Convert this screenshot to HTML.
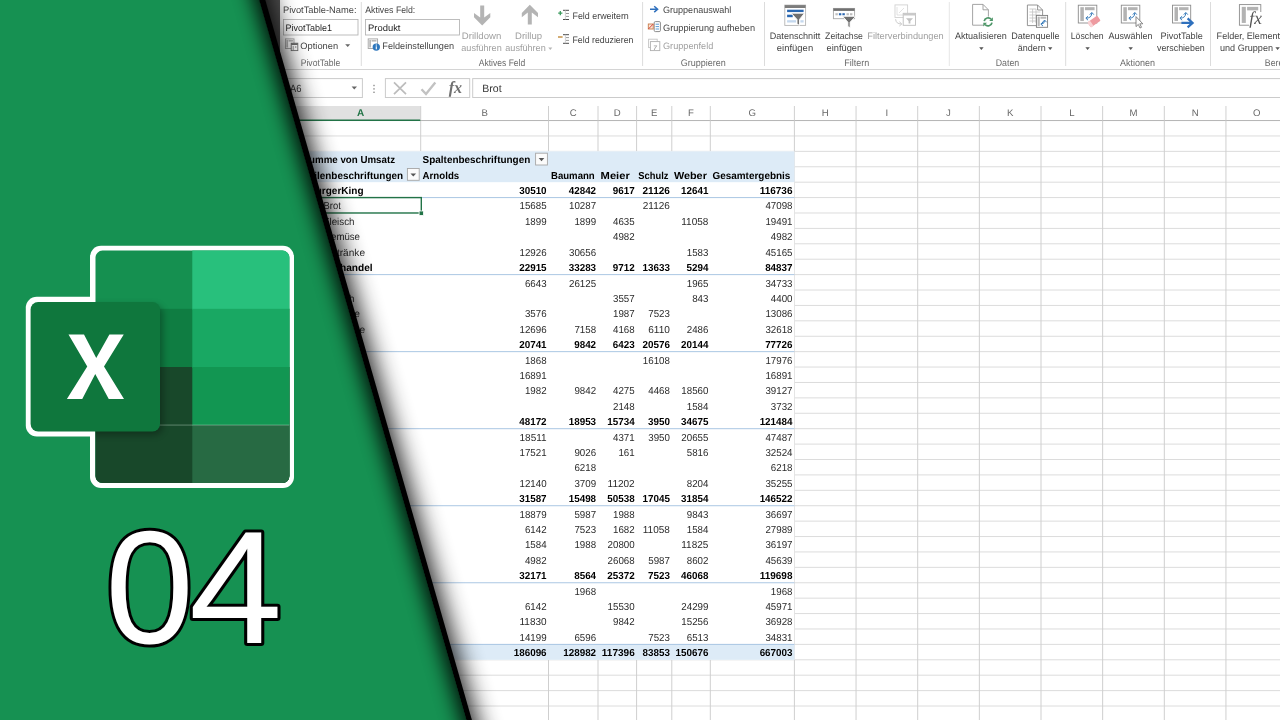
<!DOCTYPE html>
<html lang="de"><head><meta charset="utf-8"><title>Excel PivotTable 04</title>
<style>html,body{margin:0;padding:0;background:#fff;overflow:hidden}svg{display:block}</style>
</head><body>
<svg width="1280" height="720" viewBox="0 0 1280 720" text-rendering="geometricPrecision" font-family='"Liberation Sans", sans-serif'>
<defs>
<filter id="soft" x="-5%" y="-5%" width="110%" height="110%"><feGaussianBlur stdDeviation="0.4"/></filter>
<filter id="shb" x="-20%" y="-20%" width="140%" height="140%"><feGaussianBlur stdDeviation="12"/></filter>
<filter id="shg" x="-30%" y="-20%" width="160%" height="140%"><feGaussianBlur stdDeviation="10"/></filter>
<filter id="shl" x="-20%" y="-20%" width="140%" height="140%"><feGaussianBlur stdDeviation="3.5"/></filter>
<clipPath id="greenclip"><polygon points="0,0 259.5,0 466.5,720 0,720"/></clipPath>
</defs>
<rect width="1280" height="720" fill="#ffffff"/>
<g id="excel" filter="url(#soft)">
<line x1="276" y1="135.96" x2="1280" y2="135.96" stroke="#dcdcdc" stroke-width="1"/>
<line x1="276" y1="151.36" x2="1280" y2="151.36" stroke="#dcdcdc" stroke-width="1"/>
<line x1="276" y1="166.77" x2="1280" y2="166.77" stroke="#dcdcdc" stroke-width="1"/>
<line x1="276" y1="182.18" x2="1280" y2="182.18" stroke="#dcdcdc" stroke-width="1"/>
<line x1="276" y1="197.58" x2="1280" y2="197.58" stroke="#dcdcdc" stroke-width="1"/>
<line x1="276" y1="212.99" x2="1280" y2="212.99" stroke="#dcdcdc" stroke-width="1"/>
<line x1="276" y1="228.40" x2="1280" y2="228.40" stroke="#dcdcdc" stroke-width="1"/>
<line x1="276" y1="243.81" x2="1280" y2="243.81" stroke="#dcdcdc" stroke-width="1"/>
<line x1="276" y1="259.21" x2="1280" y2="259.21" stroke="#dcdcdc" stroke-width="1"/>
<line x1="276" y1="274.62" x2="1280" y2="274.62" stroke="#dcdcdc" stroke-width="1"/>
<line x1="276" y1="290.03" x2="1280" y2="290.03" stroke="#dcdcdc" stroke-width="1"/>
<line x1="276" y1="305.43" x2="1280" y2="305.43" stroke="#dcdcdc" stroke-width="1"/>
<line x1="276" y1="320.84" x2="1280" y2="320.84" stroke="#dcdcdc" stroke-width="1"/>
<line x1="276" y1="336.25" x2="1280" y2="336.25" stroke="#dcdcdc" stroke-width="1"/>
<line x1="276" y1="351.65" x2="1280" y2="351.65" stroke="#dcdcdc" stroke-width="1"/>
<line x1="276" y1="367.06" x2="1280" y2="367.06" stroke="#dcdcdc" stroke-width="1"/>
<line x1="276" y1="382.47" x2="1280" y2="382.47" stroke="#dcdcdc" stroke-width="1"/>
<line x1="276" y1="397.88" x2="1280" y2="397.88" stroke="#dcdcdc" stroke-width="1"/>
<line x1="276" y1="413.28" x2="1280" y2="413.28" stroke="#dcdcdc" stroke-width="1"/>
<line x1="276" y1="428.69" x2="1280" y2="428.69" stroke="#dcdcdc" stroke-width="1"/>
<line x1="276" y1="444.10" x2="1280" y2="444.10" stroke="#dcdcdc" stroke-width="1"/>
<line x1="276" y1="459.50" x2="1280" y2="459.50" stroke="#dcdcdc" stroke-width="1"/>
<line x1="276" y1="474.91" x2="1280" y2="474.91" stroke="#dcdcdc" stroke-width="1"/>
<line x1="276" y1="490.32" x2="1280" y2="490.32" stroke="#dcdcdc" stroke-width="1"/>
<line x1="276" y1="505.73" x2="1280" y2="505.73" stroke="#dcdcdc" stroke-width="1"/>
<line x1="276" y1="521.13" x2="1280" y2="521.13" stroke="#dcdcdc" stroke-width="1"/>
<line x1="276" y1="536.54" x2="1280" y2="536.54" stroke="#dcdcdc" stroke-width="1"/>
<line x1="276" y1="551.95" x2="1280" y2="551.95" stroke="#dcdcdc" stroke-width="1"/>
<line x1="276" y1="567.35" x2="1280" y2="567.35" stroke="#dcdcdc" stroke-width="1"/>
<line x1="276" y1="582.76" x2="1280" y2="582.76" stroke="#dcdcdc" stroke-width="1"/>
<line x1="276" y1="598.17" x2="1280" y2="598.17" stroke="#dcdcdc" stroke-width="1"/>
<line x1="276" y1="613.57" x2="1280" y2="613.57" stroke="#dcdcdc" stroke-width="1"/>
<line x1="276" y1="628.98" x2="1280" y2="628.98" stroke="#dcdcdc" stroke-width="1"/>
<line x1="276" y1="644.39" x2="1280" y2="644.39" stroke="#dcdcdc" stroke-width="1"/>
<line x1="276" y1="659.79" x2="1280" y2="659.79" stroke="#dcdcdc" stroke-width="1"/>
<line x1="276" y1="675.20" x2="1280" y2="675.20" stroke="#dcdcdc" stroke-width="1"/>
<line x1="276" y1="690.61" x2="1280" y2="690.61" stroke="#dcdcdc" stroke-width="1"/>
<line x1="276" y1="706.02" x2="1280" y2="706.02" stroke="#dcdcdc" stroke-width="1"/>
<line x1="276" y1="721.42" x2="1280" y2="721.42" stroke="#dcdcdc" stroke-width="1"/>
<line x1="276" y1="736.83" x2="1280" y2="736.83" stroke="#dcdcdc" stroke-width="1"/>
<line x1="420.70" y1="120.55" x2="420.70" y2="720" stroke="#cfcfcf" stroke-width="1"/>
<line x1="548.50" y1="120.55" x2="548.50" y2="720" stroke="#cfcfcf" stroke-width="1"/>
<line x1="598.00" y1="120.55" x2="598.00" y2="720" stroke="#cfcfcf" stroke-width="1"/>
<line x1="636.60" y1="120.55" x2="636.60" y2="720" stroke="#cfcfcf" stroke-width="1"/>
<line x1="671.80" y1="120.55" x2="671.80" y2="720" stroke="#cfcfcf" stroke-width="1"/>
<line x1="710.30" y1="120.55" x2="710.30" y2="720" stroke="#cfcfcf" stroke-width="1"/>
<line x1="794.40" y1="120.55" x2="794.40" y2="720" stroke="#cfcfcf" stroke-width="1"/>
<line x1="856.05" y1="120.55" x2="856.05" y2="720" stroke="#cfcfcf" stroke-width="1"/>
<line x1="917.70" y1="120.55" x2="917.70" y2="720" stroke="#cfcfcf" stroke-width="1"/>
<line x1="979.35" y1="120.55" x2="979.35" y2="720" stroke="#cfcfcf" stroke-width="1"/>
<line x1="1041.00" y1="120.55" x2="1041.00" y2="720" stroke="#cfcfcf" stroke-width="1"/>
<line x1="1102.65" y1="120.55" x2="1102.65" y2="720" stroke="#cfcfcf" stroke-width="1"/>
<line x1="1164.30" y1="120.55" x2="1164.30" y2="720" stroke="#cfcfcf" stroke-width="1"/>
<line x1="1225.95" y1="120.55" x2="1225.95" y2="720" stroke="#cfcfcf" stroke-width="1"/>
<line x1="1287.60" y1="120.55" x2="1287.60" y2="720" stroke="#cfcfcf" stroke-width="1"/>
<rect x="270.60" y="151.36" width="523.80" height="508.43" fill="#ffffff"/>
<rect x="270.00" y="151.36" width="524.40" height="30.81" fill="#ddebf7"/>
<rect x="270.00" y="644.39" width="524.40" height="15.41" fill="#ddebf7"/>
<line x1="270" y1="197.58" x2="794.40" y2="197.58" stroke="#8fb4d9" stroke-width="0.75"/>
<line x1="270" y1="274.62" x2="794.40" y2="274.62" stroke="#8fb4d9" stroke-width="0.75"/>
<line x1="270" y1="351.65" x2="794.40" y2="351.65" stroke="#8fb4d9" stroke-width="0.75"/>
<line x1="270" y1="428.69" x2="794.40" y2="428.69" stroke="#8fb4d9" stroke-width="0.75"/>
<line x1="270" y1="505.73" x2="794.40" y2="505.73" stroke="#8fb4d9" stroke-width="0.75"/>
<line x1="270" y1="582.76" x2="794.40" y2="582.76" stroke="#8fb4d9" stroke-width="0.75"/>
<line x1="270" y1="644.39" x2="794.40" y2="644.39" stroke="#8fb4d9" stroke-width="0.75"/>
<rect x="270.00" y="98.00" width="1010.00" height="22.55" fill="#ffffff"/>
<rect x="270.60" y="106.00" width="150.10" height="14.55" fill="#e1e1e1"/>
<line x1="270" y1="120.55" x2="1280" y2="120.55" stroke="#b4b4b4" stroke-width="1"/>
<line x1="270" y1="120.25" x2="420.70" y2="120.25" stroke="#217346" stroke-width="1.6"/>
<line x1="420.70" y1="106" x2="420.70" y2="120.55" stroke="#d0d0d0" stroke-width="1"/>
<text x="360.65" y="116.18" font-size="10.0" text-anchor="middle" font-weight="bold" fill="#217346">A</text>
<line x1="548.50" y1="106" x2="548.50" y2="120.55" stroke="#d0d0d0" stroke-width="1"/>
<text x="484.60" y="116.04" font-size="9.6" text-anchor="middle" fill="#686868">B</text>
<line x1="598.00" y1="106" x2="598.00" y2="120.55" stroke="#d0d0d0" stroke-width="1"/>
<text x="573.25" y="116.04" font-size="9.6" text-anchor="middle" fill="#686868">C</text>
<line x1="636.60" y1="106" x2="636.60" y2="120.55" stroke="#d0d0d0" stroke-width="1"/>
<text x="617.30" y="116.04" font-size="9.6" text-anchor="middle" fill="#686868">D</text>
<line x1="671.80" y1="106" x2="671.80" y2="120.55" stroke="#d0d0d0" stroke-width="1"/>
<text x="654.20" y="116.04" font-size="9.6" text-anchor="middle" fill="#686868">E</text>
<line x1="710.30" y1="106" x2="710.30" y2="120.55" stroke="#d0d0d0" stroke-width="1"/>
<text x="691.05" y="116.04" font-size="9.6" text-anchor="middle" fill="#686868">F</text>
<line x1="794.40" y1="106" x2="794.40" y2="120.55" stroke="#d0d0d0" stroke-width="1"/>
<text x="752.35" y="116.04" font-size="9.6" text-anchor="middle" fill="#686868">G</text>
<line x1="856.05" y1="106" x2="856.05" y2="120.55" stroke="#d0d0d0" stroke-width="1"/>
<text x="825.22" y="116.04" font-size="9.6" text-anchor="middle" fill="#686868">H</text>
<line x1="917.70" y1="106" x2="917.70" y2="120.55" stroke="#d0d0d0" stroke-width="1"/>
<text x="886.88" y="116.04" font-size="9.6" text-anchor="middle" fill="#686868">I</text>
<line x1="979.35" y1="106" x2="979.35" y2="120.55" stroke="#d0d0d0" stroke-width="1"/>
<text x="948.52" y="116.04" font-size="9.6" text-anchor="middle" fill="#686868">J</text>
<line x1="1041.00" y1="106" x2="1041.00" y2="120.55" stroke="#d0d0d0" stroke-width="1"/>
<text x="1010.17" y="116.04" font-size="9.6" text-anchor="middle" fill="#686868">K</text>
<line x1="1102.65" y1="106" x2="1102.65" y2="120.55" stroke="#d0d0d0" stroke-width="1"/>
<text x="1071.83" y="116.04" font-size="9.6" text-anchor="middle" fill="#686868">L</text>
<line x1="1164.30" y1="106" x2="1164.30" y2="120.55" stroke="#d0d0d0" stroke-width="1"/>
<text x="1133.48" y="116.04" font-size="9.6" text-anchor="middle" fill="#686868">M</text>
<line x1="1225.95" y1="106" x2="1225.95" y2="120.55" stroke="#d0d0d0" stroke-width="1"/>
<text x="1195.13" y="116.04" font-size="9.6" text-anchor="middle" fill="#686868">N</text>
<text x="1256.78" y="116.04" font-size="9.6" text-anchor="middle" fill="#686868">O</text>
<text x="302.60" y="163.24" font-size="10.1" text-anchor="start" font-weight="bold" fill="#000000" textLength="92.40" lengthAdjust="spacingAndGlyphs">Summe von Umsatz</text>
<text x="422.60" y="163.24" font-size="10.1" text-anchor="start" font-weight="bold" fill="#000000" textLength="107.70" lengthAdjust="spacingAndGlyphs">Spaltenbeschriftungen</text>
<text x="302.60" y="178.65" font-size="10.1" text-anchor="start" font-weight="bold" fill="#000000" textLength="100.50" lengthAdjust="spacingAndGlyphs">Zeilenbeschriftungen</text>
<text x="422.60" y="178.65" font-size="10.1" text-anchor="start" font-weight="bold" fill="#000000" textLength="36.60" lengthAdjust="spacingAndGlyphs">Arnolds</text>
<text x="551.00" y="178.65" font-size="10.1" text-anchor="start" font-weight="bold" fill="#000000" textLength="43.70" lengthAdjust="spacingAndGlyphs">Baumann</text>
<text x="600.60" y="178.65" font-size="10.1" text-anchor="start" font-weight="bold" fill="#000000" textLength="29.20" lengthAdjust="spacingAndGlyphs">Meier</text>
<text x="638.30" y="178.65" font-size="10.1" text-anchor="start" font-weight="bold" fill="#000000" textLength="30.10" lengthAdjust="spacingAndGlyphs">Schulz</text>
<text x="673.90" y="178.65" font-size="10.1" text-anchor="start" font-weight="bold" fill="#000000" textLength="33.00" lengthAdjust="spacingAndGlyphs">Weber</text>
<text x="712.40" y="178.65" font-size="10.1" text-anchor="start" font-weight="bold" fill="#000000" textLength="78.00" lengthAdjust="spacingAndGlyphs">Gesamtergebnis</text>
<rect x="535.60" y="153.20" width="11.80" height="11.80" fill="#fbfbfb" stroke="#a6a6a6" stroke-width="0.9"/>
<polygon points="538.70,158.10 544.30,158.10 541.50,161.20" fill="#555"/>
<rect x="407.40" y="168.50" width="11.80" height="11.80" fill="#fbfbfb" stroke="#a6a6a6" stroke-width="0.9"/>
<polygon points="410.50,173.40 416.10,173.40 413.30,176.50" fill="#555"/>
<text x="546.60" y="194.06" font-size="10.1" text-anchor="end" font-weight="bold" fill="#000000" textLength="27.37" lengthAdjust="spacingAndGlyphs">30510</text>
<text x="596.10" y="194.06" font-size="10.1" text-anchor="end" font-weight="bold" fill="#000000" textLength="27.37" lengthAdjust="spacingAndGlyphs">42842</text>
<text x="634.70" y="194.06" font-size="10.1" text-anchor="end" font-weight="bold" fill="#000000" textLength="21.90" lengthAdjust="spacingAndGlyphs">9617</text>
<text x="669.90" y="194.06" font-size="10.1" text-anchor="end" font-weight="bold" fill="#000000" textLength="27.37" lengthAdjust="spacingAndGlyphs">21126</text>
<text x="708.40" y="194.06" font-size="10.1" text-anchor="end" font-weight="bold" fill="#000000" textLength="27.37" lengthAdjust="spacingAndGlyphs">12641</text>
<text x="792.50" y="194.06" font-size="10.1" text-anchor="end" font-weight="bold" fill="#000000" textLength="32.85" lengthAdjust="spacingAndGlyphs">116736</text>
<text x="308.50" y="194.06" font-size="10.1" text-anchor="start" font-weight="bold" fill="#000000" textLength="55.00" lengthAdjust="spacingAndGlyphs">BurgerKing</text>
<text x="546.60" y="209.46" font-size="10.1" text-anchor="end" fill="#2b2b2b" textLength="27.10" lengthAdjust="spacingAndGlyphs">15685</text>
<text x="596.10" y="209.46" font-size="10.1" text-anchor="end" fill="#2b2b2b" textLength="27.10" lengthAdjust="spacingAndGlyphs">10287</text>
<text x="669.90" y="209.46" font-size="10.1" text-anchor="end" fill="#2b2b2b" textLength="27.10" lengthAdjust="spacingAndGlyphs">21126</text>
<text x="792.50" y="209.46" font-size="10.1" text-anchor="end" fill="#2b2b2b" textLength="27.10" lengthAdjust="spacingAndGlyphs">47098</text>
<text x="323.50" y="209.46" font-size="10.1" text-anchor="start" fill="#2b2b2b" textLength="17.30" lengthAdjust="spacingAndGlyphs">Brot</text>
<text x="546.60" y="224.87" font-size="10.1" text-anchor="end" fill="#2b2b2b" textLength="21.68" lengthAdjust="spacingAndGlyphs">1899</text>
<text x="596.10" y="224.87" font-size="10.1" text-anchor="end" fill="#2b2b2b" textLength="21.68" lengthAdjust="spacingAndGlyphs">1899</text>
<text x="634.70" y="224.87" font-size="10.1" text-anchor="end" fill="#2b2b2b" textLength="21.68" lengthAdjust="spacingAndGlyphs">4635</text>
<text x="708.40" y="224.87" font-size="10.1" text-anchor="end" fill="#2b2b2b" textLength="27.10" lengthAdjust="spacingAndGlyphs">11058</text>
<text x="792.50" y="224.87" font-size="10.1" text-anchor="end" fill="#2b2b2b" textLength="27.10" lengthAdjust="spacingAndGlyphs">19491</text>
<text x="323.50" y="224.87" font-size="10.1" text-anchor="start" fill="#2b2b2b" textLength="31.00" lengthAdjust="spacingAndGlyphs">Fleisch</text>
<text x="634.70" y="240.28" font-size="10.1" text-anchor="end" fill="#2b2b2b" textLength="21.68" lengthAdjust="spacingAndGlyphs">4982</text>
<text x="792.50" y="240.28" font-size="10.1" text-anchor="end" fill="#2b2b2b" textLength="21.68" lengthAdjust="spacingAndGlyphs">4982</text>
<text x="323.50" y="240.28" font-size="10.1" text-anchor="start" fill="#2b2b2b" textLength="36.50" lengthAdjust="spacingAndGlyphs">Gemüse</text>
<text x="546.60" y="255.69" font-size="10.1" text-anchor="end" fill="#2b2b2b" textLength="27.10" lengthAdjust="spacingAndGlyphs">12926</text>
<text x="596.10" y="255.69" font-size="10.1" text-anchor="end" fill="#2b2b2b" textLength="27.10" lengthAdjust="spacingAndGlyphs">30656</text>
<text x="708.40" y="255.69" font-size="10.1" text-anchor="end" fill="#2b2b2b" textLength="21.68" lengthAdjust="spacingAndGlyphs">1583</text>
<text x="792.50" y="255.69" font-size="10.1" text-anchor="end" fill="#2b2b2b" textLength="27.10" lengthAdjust="spacingAndGlyphs">45165</text>
<text x="323.50" y="255.69" font-size="10.1" text-anchor="start" fill="#2b2b2b" textLength="41.50" lengthAdjust="spacingAndGlyphs">Getränke</text>
<text x="546.60" y="271.09" font-size="10.1" text-anchor="end" font-weight="bold" fill="#000000" textLength="27.37" lengthAdjust="spacingAndGlyphs">22915</text>
<text x="596.10" y="271.09" font-size="10.1" text-anchor="end" font-weight="bold" fill="#000000" textLength="27.37" lengthAdjust="spacingAndGlyphs">33283</text>
<text x="634.70" y="271.09" font-size="10.1" text-anchor="end" font-weight="bold" fill="#000000" textLength="21.90" lengthAdjust="spacingAndGlyphs">9712</text>
<text x="669.90" y="271.09" font-size="10.1" text-anchor="end" font-weight="bold" fill="#000000" textLength="27.37" lengthAdjust="spacingAndGlyphs">13633</text>
<text x="708.40" y="271.09" font-size="10.1" text-anchor="end" font-weight="bold" fill="#000000" textLength="21.90" lengthAdjust="spacingAndGlyphs">5294</text>
<text x="792.50" y="271.09" font-size="10.1" text-anchor="end" font-weight="bold" fill="#000000" textLength="27.37" lengthAdjust="spacingAndGlyphs">84837</text>
<text x="310.70" y="271.09" font-size="10.1" text-anchor="start" font-weight="bold" fill="#000000" textLength="62.00" lengthAdjust="spacingAndGlyphs">Einzelhandel</text>
<text x="546.60" y="286.50" font-size="10.1" text-anchor="end" fill="#2b2b2b" textLength="21.68" lengthAdjust="spacingAndGlyphs">6643</text>
<text x="596.10" y="286.50" font-size="10.1" text-anchor="end" fill="#2b2b2b" textLength="27.10" lengthAdjust="spacingAndGlyphs">26125</text>
<text x="708.40" y="286.50" font-size="10.1" text-anchor="end" fill="#2b2b2b" textLength="21.68" lengthAdjust="spacingAndGlyphs">1965</text>
<text x="792.50" y="286.50" font-size="10.1" text-anchor="end" fill="#2b2b2b" textLength="27.10" lengthAdjust="spacingAndGlyphs">34733</text>
<text x="323.50" y="286.50" font-size="10.1" text-anchor="start" fill="#2b2b2b" textLength="17.30" lengthAdjust="spacingAndGlyphs">Brot</text>
<text x="634.70" y="301.91" font-size="10.1" text-anchor="end" fill="#2b2b2b" textLength="21.68" lengthAdjust="spacingAndGlyphs">3557</text>
<text x="708.40" y="301.91" font-size="10.1" text-anchor="end" fill="#2b2b2b" textLength="16.26" lengthAdjust="spacingAndGlyphs">843</text>
<text x="792.50" y="301.91" font-size="10.1" text-anchor="end" fill="#2b2b2b" textLength="21.68" lengthAdjust="spacingAndGlyphs">4400</text>
<text x="323.50" y="301.91" font-size="10.1" text-anchor="start" fill="#2b2b2b" textLength="31.00" lengthAdjust="spacingAndGlyphs">Fleisch</text>
<text x="546.60" y="317.31" font-size="10.1" text-anchor="end" fill="#2b2b2b" textLength="21.68" lengthAdjust="spacingAndGlyphs">3576</text>
<text x="634.70" y="317.31" font-size="10.1" text-anchor="end" fill="#2b2b2b" textLength="21.68" lengthAdjust="spacingAndGlyphs">1987</text>
<text x="669.90" y="317.31" font-size="10.1" text-anchor="end" fill="#2b2b2b" textLength="21.68" lengthAdjust="spacingAndGlyphs">7523</text>
<text x="792.50" y="317.31" font-size="10.1" text-anchor="end" fill="#2b2b2b" textLength="27.10" lengthAdjust="spacingAndGlyphs">13086</text>
<text x="323.50" y="317.31" font-size="10.1" text-anchor="start" fill="#2b2b2b" textLength="36.50" lengthAdjust="spacingAndGlyphs">Gemüse</text>
<text x="546.60" y="332.72" font-size="10.1" text-anchor="end" fill="#2b2b2b" textLength="27.10" lengthAdjust="spacingAndGlyphs">12696</text>
<text x="596.10" y="332.72" font-size="10.1" text-anchor="end" fill="#2b2b2b" textLength="21.68" lengthAdjust="spacingAndGlyphs">7158</text>
<text x="634.70" y="332.72" font-size="10.1" text-anchor="end" fill="#2b2b2b" textLength="21.68" lengthAdjust="spacingAndGlyphs">4168</text>
<text x="669.90" y="332.72" font-size="10.1" text-anchor="end" fill="#2b2b2b" textLength="21.68" lengthAdjust="spacingAndGlyphs">6110</text>
<text x="708.40" y="332.72" font-size="10.1" text-anchor="end" fill="#2b2b2b" textLength="21.68" lengthAdjust="spacingAndGlyphs">2486</text>
<text x="792.50" y="332.72" font-size="10.1" text-anchor="end" fill="#2b2b2b" textLength="27.10" lengthAdjust="spacingAndGlyphs">32618</text>
<text x="323.50" y="332.72" font-size="10.1" text-anchor="start" fill="#2b2b2b" textLength="41.50" lengthAdjust="spacingAndGlyphs">Getränke</text>
<text x="546.60" y="348.13" font-size="10.1" text-anchor="end" font-weight="bold" fill="#000000" textLength="27.37" lengthAdjust="spacingAndGlyphs">20741</text>
<text x="596.10" y="348.13" font-size="10.1" text-anchor="end" font-weight="bold" fill="#000000" textLength="21.90" lengthAdjust="spacingAndGlyphs">9842</text>
<text x="634.70" y="348.13" font-size="10.1" text-anchor="end" font-weight="bold" fill="#000000" textLength="21.90" lengthAdjust="spacingAndGlyphs">6423</text>
<text x="669.90" y="348.13" font-size="10.1" text-anchor="end" font-weight="bold" fill="#000000" textLength="27.37" lengthAdjust="spacingAndGlyphs">20576</text>
<text x="708.40" y="348.13" font-size="10.1" text-anchor="end" font-weight="bold" fill="#000000" textLength="27.37" lengthAdjust="spacingAndGlyphs">20144</text>
<text x="792.50" y="348.13" font-size="10.1" text-anchor="end" font-weight="bold" fill="#000000" textLength="27.37" lengthAdjust="spacingAndGlyphs">77726</text>
<text x="546.60" y="363.53" font-size="10.1" text-anchor="end" fill="#2b2b2b" textLength="21.68" lengthAdjust="spacingAndGlyphs">1868</text>
<text x="669.90" y="363.53" font-size="10.1" text-anchor="end" fill="#2b2b2b" textLength="27.10" lengthAdjust="spacingAndGlyphs">16108</text>
<text x="792.50" y="363.53" font-size="10.1" text-anchor="end" fill="#2b2b2b" textLength="27.10" lengthAdjust="spacingAndGlyphs">17976</text>
<text x="546.60" y="378.94" font-size="10.1" text-anchor="end" fill="#2b2b2b" textLength="27.10" lengthAdjust="spacingAndGlyphs">16891</text>
<text x="792.50" y="378.94" font-size="10.1" text-anchor="end" fill="#2b2b2b" textLength="27.10" lengthAdjust="spacingAndGlyphs">16891</text>
<text x="546.60" y="394.35" font-size="10.1" text-anchor="end" fill="#2b2b2b" textLength="21.68" lengthAdjust="spacingAndGlyphs">1982</text>
<text x="596.10" y="394.35" font-size="10.1" text-anchor="end" fill="#2b2b2b" textLength="21.68" lengthAdjust="spacingAndGlyphs">9842</text>
<text x="634.70" y="394.35" font-size="10.1" text-anchor="end" fill="#2b2b2b" textLength="21.68" lengthAdjust="spacingAndGlyphs">4275</text>
<text x="669.90" y="394.35" font-size="10.1" text-anchor="end" fill="#2b2b2b" textLength="21.68" lengthAdjust="spacingAndGlyphs">4468</text>
<text x="708.40" y="394.35" font-size="10.1" text-anchor="end" fill="#2b2b2b" textLength="27.10" lengthAdjust="spacingAndGlyphs">18560</text>
<text x="792.50" y="394.35" font-size="10.1" text-anchor="end" fill="#2b2b2b" textLength="27.10" lengthAdjust="spacingAndGlyphs">39127</text>
<text x="634.70" y="409.76" font-size="10.1" text-anchor="end" fill="#2b2b2b" textLength="21.68" lengthAdjust="spacingAndGlyphs">2148</text>
<text x="708.40" y="409.76" font-size="10.1" text-anchor="end" fill="#2b2b2b" textLength="21.68" lengthAdjust="spacingAndGlyphs">1584</text>
<text x="792.50" y="409.76" font-size="10.1" text-anchor="end" fill="#2b2b2b" textLength="21.68" lengthAdjust="spacingAndGlyphs">3732</text>
<text x="546.60" y="425.16" font-size="10.1" text-anchor="end" font-weight="bold" fill="#000000" textLength="27.37" lengthAdjust="spacingAndGlyphs">48172</text>
<text x="596.10" y="425.16" font-size="10.1" text-anchor="end" font-weight="bold" fill="#000000" textLength="27.37" lengthAdjust="spacingAndGlyphs">18953</text>
<text x="634.70" y="425.16" font-size="10.1" text-anchor="end" font-weight="bold" fill="#000000" textLength="27.37" lengthAdjust="spacingAndGlyphs">15734</text>
<text x="669.90" y="425.16" font-size="10.1" text-anchor="end" font-weight="bold" fill="#000000" textLength="21.90" lengthAdjust="spacingAndGlyphs">3950</text>
<text x="708.40" y="425.16" font-size="10.1" text-anchor="end" font-weight="bold" fill="#000000" textLength="27.37" lengthAdjust="spacingAndGlyphs">34675</text>
<text x="792.50" y="425.16" font-size="10.1" text-anchor="end" font-weight="bold" fill="#000000" textLength="32.85" lengthAdjust="spacingAndGlyphs">121484</text>
<text x="546.60" y="440.57" font-size="10.1" text-anchor="end" fill="#2b2b2b" textLength="27.10" lengthAdjust="spacingAndGlyphs">18511</text>
<text x="634.70" y="440.57" font-size="10.1" text-anchor="end" fill="#2b2b2b" textLength="21.68" lengthAdjust="spacingAndGlyphs">4371</text>
<text x="669.90" y="440.57" font-size="10.1" text-anchor="end" fill="#2b2b2b" textLength="21.68" lengthAdjust="spacingAndGlyphs">3950</text>
<text x="708.40" y="440.57" font-size="10.1" text-anchor="end" fill="#2b2b2b" textLength="27.10" lengthAdjust="spacingAndGlyphs">20655</text>
<text x="792.50" y="440.57" font-size="10.1" text-anchor="end" fill="#2b2b2b" textLength="27.10" lengthAdjust="spacingAndGlyphs">47487</text>
<text x="546.60" y="455.98" font-size="10.1" text-anchor="end" fill="#2b2b2b" textLength="27.10" lengthAdjust="spacingAndGlyphs">17521</text>
<text x="596.10" y="455.98" font-size="10.1" text-anchor="end" fill="#2b2b2b" textLength="21.68" lengthAdjust="spacingAndGlyphs">9026</text>
<text x="634.70" y="455.98" font-size="10.1" text-anchor="end" fill="#2b2b2b" textLength="16.26" lengthAdjust="spacingAndGlyphs">161</text>
<text x="708.40" y="455.98" font-size="10.1" text-anchor="end" fill="#2b2b2b" textLength="21.68" lengthAdjust="spacingAndGlyphs">5816</text>
<text x="792.50" y="455.98" font-size="10.1" text-anchor="end" fill="#2b2b2b" textLength="27.10" lengthAdjust="spacingAndGlyphs">32524</text>
<text x="596.10" y="471.38" font-size="10.1" text-anchor="end" fill="#2b2b2b" textLength="21.68" lengthAdjust="spacingAndGlyphs">6218</text>
<text x="792.50" y="471.38" font-size="10.1" text-anchor="end" fill="#2b2b2b" textLength="21.68" lengthAdjust="spacingAndGlyphs">6218</text>
<text x="546.60" y="486.79" font-size="10.1" text-anchor="end" fill="#2b2b2b" textLength="27.10" lengthAdjust="spacingAndGlyphs">12140</text>
<text x="596.10" y="486.79" font-size="10.1" text-anchor="end" fill="#2b2b2b" textLength="21.68" lengthAdjust="spacingAndGlyphs">3709</text>
<text x="634.70" y="486.79" font-size="10.1" text-anchor="end" fill="#2b2b2b" textLength="27.10" lengthAdjust="spacingAndGlyphs">11202</text>
<text x="708.40" y="486.79" font-size="10.1" text-anchor="end" fill="#2b2b2b" textLength="21.68" lengthAdjust="spacingAndGlyphs">8204</text>
<text x="792.50" y="486.79" font-size="10.1" text-anchor="end" fill="#2b2b2b" textLength="27.10" lengthAdjust="spacingAndGlyphs">35255</text>
<text x="546.60" y="502.20" font-size="10.1" text-anchor="end" font-weight="bold" fill="#000000" textLength="27.37" lengthAdjust="spacingAndGlyphs">31587</text>
<text x="596.10" y="502.20" font-size="10.1" text-anchor="end" font-weight="bold" fill="#000000" textLength="27.37" lengthAdjust="spacingAndGlyphs">15498</text>
<text x="634.70" y="502.20" font-size="10.1" text-anchor="end" font-weight="bold" fill="#000000" textLength="27.37" lengthAdjust="spacingAndGlyphs">50538</text>
<text x="669.90" y="502.20" font-size="10.1" text-anchor="end" font-weight="bold" fill="#000000" textLength="27.37" lengthAdjust="spacingAndGlyphs">17045</text>
<text x="708.40" y="502.20" font-size="10.1" text-anchor="end" font-weight="bold" fill="#000000" textLength="27.37" lengthAdjust="spacingAndGlyphs">31854</text>
<text x="792.50" y="502.20" font-size="10.1" text-anchor="end" font-weight="bold" fill="#000000" textLength="32.85" lengthAdjust="spacingAndGlyphs">146522</text>
<text x="546.60" y="517.60" font-size="10.1" text-anchor="end" fill="#2b2b2b" textLength="27.10" lengthAdjust="spacingAndGlyphs">18879</text>
<text x="596.10" y="517.60" font-size="10.1" text-anchor="end" fill="#2b2b2b" textLength="21.68" lengthAdjust="spacingAndGlyphs">5987</text>
<text x="634.70" y="517.60" font-size="10.1" text-anchor="end" fill="#2b2b2b" textLength="21.68" lengthAdjust="spacingAndGlyphs">1988</text>
<text x="708.40" y="517.60" font-size="10.1" text-anchor="end" fill="#2b2b2b" textLength="21.68" lengthAdjust="spacingAndGlyphs">9843</text>
<text x="792.50" y="517.60" font-size="10.1" text-anchor="end" fill="#2b2b2b" textLength="27.10" lengthAdjust="spacingAndGlyphs">36697</text>
<text x="546.60" y="533.01" font-size="10.1" text-anchor="end" fill="#2b2b2b" textLength="21.68" lengthAdjust="spacingAndGlyphs">6142</text>
<text x="596.10" y="533.01" font-size="10.1" text-anchor="end" fill="#2b2b2b" textLength="21.68" lengthAdjust="spacingAndGlyphs">7523</text>
<text x="634.70" y="533.01" font-size="10.1" text-anchor="end" fill="#2b2b2b" textLength="21.68" lengthAdjust="spacingAndGlyphs">1682</text>
<text x="669.90" y="533.01" font-size="10.1" text-anchor="end" fill="#2b2b2b" textLength="27.10" lengthAdjust="spacingAndGlyphs">11058</text>
<text x="708.40" y="533.01" font-size="10.1" text-anchor="end" fill="#2b2b2b" textLength="21.68" lengthAdjust="spacingAndGlyphs">1584</text>
<text x="792.50" y="533.01" font-size="10.1" text-anchor="end" fill="#2b2b2b" textLength="27.10" lengthAdjust="spacingAndGlyphs">27989</text>
<text x="546.60" y="548.42" font-size="10.1" text-anchor="end" fill="#2b2b2b" textLength="21.68" lengthAdjust="spacingAndGlyphs">1584</text>
<text x="596.10" y="548.42" font-size="10.1" text-anchor="end" fill="#2b2b2b" textLength="21.68" lengthAdjust="spacingAndGlyphs">1988</text>
<text x="634.70" y="548.42" font-size="10.1" text-anchor="end" fill="#2b2b2b" textLength="27.10" lengthAdjust="spacingAndGlyphs">20800</text>
<text x="708.40" y="548.42" font-size="10.1" text-anchor="end" fill="#2b2b2b" textLength="27.10" lengthAdjust="spacingAndGlyphs">11825</text>
<text x="792.50" y="548.42" font-size="10.1" text-anchor="end" fill="#2b2b2b" textLength="27.10" lengthAdjust="spacingAndGlyphs">36197</text>
<text x="546.60" y="563.83" font-size="10.1" text-anchor="end" fill="#2b2b2b" textLength="21.68" lengthAdjust="spacingAndGlyphs">4982</text>
<text x="634.70" y="563.83" font-size="10.1" text-anchor="end" fill="#2b2b2b" textLength="27.10" lengthAdjust="spacingAndGlyphs">26068</text>
<text x="669.90" y="563.83" font-size="10.1" text-anchor="end" fill="#2b2b2b" textLength="21.68" lengthAdjust="spacingAndGlyphs">5987</text>
<text x="708.40" y="563.83" font-size="10.1" text-anchor="end" fill="#2b2b2b" textLength="21.68" lengthAdjust="spacingAndGlyphs">8602</text>
<text x="792.50" y="563.83" font-size="10.1" text-anchor="end" fill="#2b2b2b" textLength="27.10" lengthAdjust="spacingAndGlyphs">45639</text>
<text x="546.60" y="579.23" font-size="10.1" text-anchor="end" font-weight="bold" fill="#000000" textLength="27.37" lengthAdjust="spacingAndGlyphs">32171</text>
<text x="596.10" y="579.23" font-size="10.1" text-anchor="end" font-weight="bold" fill="#000000" textLength="21.90" lengthAdjust="spacingAndGlyphs">8564</text>
<text x="634.70" y="579.23" font-size="10.1" text-anchor="end" font-weight="bold" fill="#000000" textLength="27.37" lengthAdjust="spacingAndGlyphs">25372</text>
<text x="669.90" y="579.23" font-size="10.1" text-anchor="end" font-weight="bold" fill="#000000" textLength="21.90" lengthAdjust="spacingAndGlyphs">7523</text>
<text x="708.40" y="579.23" font-size="10.1" text-anchor="end" font-weight="bold" fill="#000000" textLength="27.37" lengthAdjust="spacingAndGlyphs">46068</text>
<text x="792.50" y="579.23" font-size="10.1" text-anchor="end" font-weight="bold" fill="#000000" textLength="32.85" lengthAdjust="spacingAndGlyphs">119698</text>
<text x="596.10" y="594.64" font-size="10.1" text-anchor="end" fill="#2b2b2b" textLength="21.68" lengthAdjust="spacingAndGlyphs">1968</text>
<text x="792.50" y="594.64" font-size="10.1" text-anchor="end" fill="#2b2b2b" textLength="21.68" lengthAdjust="spacingAndGlyphs">1968</text>
<text x="546.60" y="610.05" font-size="10.1" text-anchor="end" fill="#2b2b2b" textLength="21.68" lengthAdjust="spacingAndGlyphs">6142</text>
<text x="634.70" y="610.05" font-size="10.1" text-anchor="end" fill="#2b2b2b" textLength="27.10" lengthAdjust="spacingAndGlyphs">15530</text>
<text x="708.40" y="610.05" font-size="10.1" text-anchor="end" fill="#2b2b2b" textLength="27.10" lengthAdjust="spacingAndGlyphs">24299</text>
<text x="792.50" y="610.05" font-size="10.1" text-anchor="end" fill="#2b2b2b" textLength="27.10" lengthAdjust="spacingAndGlyphs">45971</text>
<text x="546.60" y="625.45" font-size="10.1" text-anchor="end" fill="#2b2b2b" textLength="27.10" lengthAdjust="spacingAndGlyphs">11830</text>
<text x="634.70" y="625.45" font-size="10.1" text-anchor="end" fill="#2b2b2b" textLength="21.68" lengthAdjust="spacingAndGlyphs">9842</text>
<text x="708.40" y="625.45" font-size="10.1" text-anchor="end" fill="#2b2b2b" textLength="27.10" lengthAdjust="spacingAndGlyphs">15256</text>
<text x="792.50" y="625.45" font-size="10.1" text-anchor="end" fill="#2b2b2b" textLength="27.10" lengthAdjust="spacingAndGlyphs">36928</text>
<text x="546.60" y="640.86" font-size="10.1" text-anchor="end" fill="#2b2b2b" textLength="27.10" lengthAdjust="spacingAndGlyphs">14199</text>
<text x="596.10" y="640.86" font-size="10.1" text-anchor="end" fill="#2b2b2b" textLength="21.68" lengthAdjust="spacingAndGlyphs">6596</text>
<text x="669.90" y="640.86" font-size="10.1" text-anchor="end" fill="#2b2b2b" textLength="21.68" lengthAdjust="spacingAndGlyphs">7523</text>
<text x="708.40" y="640.86" font-size="10.1" text-anchor="end" fill="#2b2b2b" textLength="21.68" lengthAdjust="spacingAndGlyphs">6513</text>
<text x="792.50" y="640.86" font-size="10.1" text-anchor="end" fill="#2b2b2b" textLength="27.10" lengthAdjust="spacingAndGlyphs">34831</text>
<text x="546.60" y="656.27" font-size="10.1" text-anchor="end" font-weight="bold" fill="#000000" textLength="32.85" lengthAdjust="spacingAndGlyphs">186096</text>
<text x="596.10" y="656.27" font-size="10.1" text-anchor="end" font-weight="bold" fill="#000000" textLength="32.85" lengthAdjust="spacingAndGlyphs">128982</text>
<text x="634.70" y="656.27" font-size="10.1" text-anchor="end" font-weight="bold" fill="#000000" textLength="32.85" lengthAdjust="spacingAndGlyphs">117396</text>
<text x="669.90" y="656.27" font-size="10.1" text-anchor="end" font-weight="bold" fill="#000000" textLength="27.37" lengthAdjust="spacingAndGlyphs">83853</text>
<text x="708.40" y="656.27" font-size="10.1" text-anchor="end" font-weight="bold" fill="#000000" textLength="32.85" lengthAdjust="spacingAndGlyphs">150676</text>
<text x="792.50" y="656.27" font-size="10.1" text-anchor="end" font-weight="bold" fill="#000000" textLength="32.85" lengthAdjust="spacingAndGlyphs">667003</text>
<rect x="300.60" y="197.58" width="120.70" height="15.41" fill="none" stroke="#217346" stroke-width="1.4"/>
<rect x="419.10" y="210.99" width="4.40" height="4.40" fill="#217346" stroke="#ffffff" stroke-width="0.8"/>
<rect x="270.00" y="0.00" width="1010.00" height="69.50" fill="#ffffff"/>
<line x1="270" y1="69.5" x2="1280" y2="69.5" stroke="#d4d4d4" stroke-width="1"/>
<line x1="361.3" y1="2" x2="361.3" y2="66" stroke="#dcdcdc" stroke-width="1"/>
<line x1="642.6" y1="2" x2="642.6" y2="66" stroke="#dcdcdc" stroke-width="1"/>
<line x1="764.5" y1="2" x2="764.5" y2="66" stroke="#dcdcdc" stroke-width="1"/>
<line x1="949.3" y1="2" x2="949.3" y2="66" stroke="#e6e6e6" stroke-width="1"/>
<line x1="1065.7" y1="2" x2="1065.7" y2="66" stroke="#dcdcdc" stroke-width="1"/>
<line x1="1210.5" y1="2" x2="1210.5" y2="66" stroke="#dcdcdc" stroke-width="1"/>
<text x="283.00" y="13.33" font-size="9.3" text-anchor="start" fill="#444444" textLength="73.50" lengthAdjust="spacingAndGlyphs">PivotTable-Name:</text>
<rect x="283.50" y="19.50" width="74.50" height="15.50" fill="#ffffff" stroke="#b2b2b2" stroke-width="0.85"/>
<text x="285.50" y="30.93" font-size="9.3" text-anchor="start" fill="#1e1e1e" textLength="46.50" lengthAdjust="spacingAndGlyphs">PivotTable1</text>
<text x="300.30" y="48.93" font-size="9.3" text-anchor="start" fill="#444444" textLength="37.80" lengthAdjust="spacingAndGlyphs">Optionen</text>
<polygon points="345.2,44.3 350.2,44.3 347.7,47" fill="#666"/>
<text x="320.50" y="66.04" font-size="9.6" text-anchor="middle" fill="#6a6a6a" textLength="39.50" lengthAdjust="spacingAndGlyphs">PivotTable</text>
<text x="365.30" y="13.33" font-size="9.3" text-anchor="start" fill="#444444" textLength="50.00" lengthAdjust="spacingAndGlyphs">Aktives Feld:</text>
<rect x="365.50" y="19.50" width="94.00" height="15.50" fill="#ffffff" stroke="#b2b2b2" stroke-width="0.85"/>
<text x="368.00" y="30.93" font-size="9.3" text-anchor="start" fill="#1e1e1e" textLength="32.50" lengthAdjust="spacingAndGlyphs">Produkt</text>
<text x="382.30" y="48.93" font-size="9.3" text-anchor="start" fill="#444444" textLength="71.80" lengthAdjust="spacingAndGlyphs">Feldeinstellungen</text>
<text x="481.50" y="39.13" font-size="9.3" text-anchor="middle" fill="#a0a0a0" textLength="39.50" lengthAdjust="spacingAndGlyphs">Drilldown</text>
<text x="481.50" y="51.33" font-size="9.3" text-anchor="middle" fill="#a0a0a0" textLength="40.50" lengthAdjust="spacingAndGlyphs">ausführen</text>
<text x="528.50" y="39.13" font-size="9.3" text-anchor="middle" fill="#a0a0a0" textLength="27.00" lengthAdjust="spacingAndGlyphs">Drillup</text>
<text x="525.50" y="51.33" font-size="9.3" text-anchor="middle" fill="#a0a0a0" textLength="40.50" lengthAdjust="spacingAndGlyphs">ausführen</text>
<polygon points="548.3,47.6 552.3,47.6 550.3,49.9" fill="#b5b5b5"/>
<text x="502.00" y="66.04" font-size="9.6" text-anchor="middle" fill="#6a6a6a" textLength="46.50" lengthAdjust="spacingAndGlyphs">Aktives Feld</text>
<text x="572.50" y="19.23" font-size="9.3" text-anchor="start" fill="#444444" textLength="56.30" lengthAdjust="spacingAndGlyphs">Feld erweitern</text>
<text x="572.50" y="43.23" font-size="9.3" text-anchor="start" fill="#444444" textLength="60.90" lengthAdjust="spacingAndGlyphs">Feld reduzieren</text>
<text x="663.00" y="13.13" font-size="9.3" text-anchor="start" fill="#444444" textLength="68.30" lengthAdjust="spacingAndGlyphs">Gruppenauswahl</text>
<text x="663.00" y="30.93" font-size="9.3" text-anchor="start" fill="#444444" textLength="92.00" lengthAdjust="spacingAndGlyphs">Gruppierung aufheben</text>
<text x="663.00" y="48.93" font-size="9.3" text-anchor="start" fill="#a0a0a0" textLength="50.30" lengthAdjust="spacingAndGlyphs">Gruppenfeld</text>
<text x="703.30" y="66.04" font-size="9.6" text-anchor="middle" fill="#6a6a6a" textLength="45.00" lengthAdjust="spacingAndGlyphs">Gruppieren</text>
<text x="795.00" y="39.13" font-size="9.3" text-anchor="middle" fill="#444444" textLength="50.50" lengthAdjust="spacingAndGlyphs">Datenschnitt</text>
<text x="795.00" y="51.33" font-size="9.3" text-anchor="middle" fill="#444444" textLength="36.30" lengthAdjust="spacingAndGlyphs">einfügen</text>
<text x="844.00" y="39.13" font-size="9.3" text-anchor="middle" fill="#444444" textLength="37.80" lengthAdjust="spacingAndGlyphs">Zeitachse</text>
<text x="844.40" y="51.33" font-size="9.3" text-anchor="middle" fill="#444444" textLength="35.60" lengthAdjust="spacingAndGlyphs">einfügen</text>
<text x="905.50" y="39.13" font-size="9.3" text-anchor="middle" fill="#a0a0a0" textLength="76.50" lengthAdjust="spacingAndGlyphs">Filterverbindungen</text>
<text x="856.80" y="66.04" font-size="9.6" text-anchor="middle" fill="#6a6a6a" textLength="25.00" lengthAdjust="spacingAndGlyphs">Filtern</text>
<text x="980.90" y="39.13" font-size="9.3" text-anchor="middle" fill="#444444" textLength="51.80" lengthAdjust="spacingAndGlyphs">Aktualisieren</text>
<polygon points="979.2,47.3 983.6,47.3 981.4,49.9" fill="#555"/>
<text x="1035.40" y="39.13" font-size="9.3" text-anchor="middle" fill="#444444" textLength="48.30" lengthAdjust="spacingAndGlyphs">Datenquelle</text>
<text x="1031.70" y="51.33" font-size="9.3" text-anchor="middle" fill="#444444" textLength="27.90" lengthAdjust="spacingAndGlyphs">ändern</text>
<polygon points="1048,47.3 1052.4,47.3 1050.2,49.9" fill="#555"/>
<text x="1007.50" y="66.04" font-size="9.6" text-anchor="middle" fill="#6a6a6a" textLength="23.50" lengthAdjust="spacingAndGlyphs">Daten</text>
<text x="1087.20" y="39.13" font-size="9.3" text-anchor="middle" fill="#444444" textLength="32.90" lengthAdjust="spacingAndGlyphs">Löschen</text>
<polygon points="1085.4,47.3 1089.8,47.3 1087.6,49.9" fill="#555"/>
<text x="1130.50" y="39.13" font-size="9.3" text-anchor="middle" fill="#444444" textLength="43.80" lengthAdjust="spacingAndGlyphs">Auswählen</text>
<polygon points="1128.5,47.3 1132.9,47.3 1130.7,49.9" fill="#555"/>
<text x="1181.70" y="39.13" font-size="9.3" text-anchor="middle" fill="#444444" textLength="42.20" lengthAdjust="spacingAndGlyphs">PivotTable</text>
<text x="1180.90" y="51.33" font-size="9.3" text-anchor="middle" fill="#444444" textLength="47.80" lengthAdjust="spacingAndGlyphs">verschieben</text>
<text x="1137.50" y="66.04" font-size="9.6" text-anchor="middle" fill="#6a6a6a" textLength="35.00" lengthAdjust="spacingAndGlyphs">Aktionen</text>
<text x="1216.60" y="39.13" font-size="9.3" text-anchor="start" fill="#444444" textLength="68.50" lengthAdjust="spacingAndGlyphs">Felder, Elemente</text>
<text x="1220.00" y="51.33" font-size="9.3" text-anchor="start" fill="#444444" textLength="53.00" lengthAdjust="spacingAndGlyphs">und Gruppen</text>
<polygon points="1275.4,47.3 1279.8,47.3 1277.6,49.9" fill="#555"/>
<text x="1264.80" y="66.04" font-size="9.6" text-anchor="start" fill="#6a6a6a" textLength="57.00" lengthAdjust="spacingAndGlyphs">Berechnungen</text>
<rect x="285.40" y="38.90" width="8.60" height="9.60" fill="#ffffff" stroke="#a3a3a3" stroke-width="0.9"/>
<rect x="288.50" y="39.96" width="4.47" height="1.63" fill="#b9b9b9"/>
<rect x="286.35" y="39.96" width="1.63" height="7.49" fill="#b9b9b9"/>
<rect x="291.20" y="43.20" width="6.60" height="7.40" fill="#ffffff" stroke="#6e6e6e" stroke-width="0.9"/>
<rect x="291.20" y="43.20" width="6.60" height="1.80" fill="#6e6e6e"/>
<rect x="292.60" y="46.40" width="1.40" height="1.20" fill="#8a8a8a"/>
<rect x="295.00" y="46.40" width="1.40" height="1.20" fill="#8a8a8a"/>
<rect x="292.60" y="48.40" width="1.40" height="1.20" fill="#8a8a8a"/>
<rect x="368.20" y="38.90" width="9.40" height="9.60" fill="#ffffff" stroke="#a3a3a3" stroke-width="0.9"/>
<rect x="371.58" y="39.96" width="4.89" height="1.63" fill="#b9b9b9"/>
<rect x="369.23" y="39.96" width="1.79" height="7.49" fill="#b9b9b9"/>
<circle cx="376.3" cy="47.1" r="3.7" fill="#2f77bd"/>
<rect x="375.75" y="46.30" width="1.10" height="3.00" fill="#ffffff"/>
<rect x="375.75" y="44.50" width="1.10" height="1.10" fill="#ffffff"/>
<path d="M480.2 5.6 H484.2 V17.6 L490.3 12.9 V17.2 L482.2 25.4 L474 17.2 V12.9 L480.2 17.6 Z" fill="#b4b4b4"/>
<path d="M527.8 24.6 H531.8 V12.4 L538 17.3 V13 L529.8 4.7 L521.8 13 V17.3 L527.8 12.4 Z" fill="#b4b4b4"/>
<path d="M558.2 13.1 H562.4 M560.3 11 V15.2" fill="none" stroke="#3a9a5c" stroke-width="1.3"/>
<path d="M563 10.3 H569 M563 19.5 H569" fill="none" stroke="#4a4a4a" stroke-width="1.0"/>
<path d="M566 13.5 H569 M566 16.4 H569" fill="none" stroke="#9a9a9a" stroke-width="1.0"/>
<path d="M565.4 10.3 V19.5" fill="none" stroke="#c4c4c4" stroke-width="0.8"/>
<path d="M558 37 H562.6" fill="none" stroke="#c28a3a" stroke-width="1.4"/>
<path d="M563 34.7 H569 M563 43.3 H569" fill="none" stroke="#4a4a4a" stroke-width="1.0"/>
<path d="M566 37.6 H569 M566 40.4 H569" fill="none" stroke="#9a9a9a" stroke-width="1.0"/>
<path d="M565.4 34.7 V43.3" fill="none" stroke="#c4c4c4" stroke-width="0.8"/>
<path d="M650 9.2 H657 M654.2 6.3 L657.6 9.2 L654.2 12.1" fill="none" stroke="#2e6fbd" stroke-width="1.5"/>
<rect x="654.20" y="21.60" width="6.20" height="10.00" fill="#ffffff" stroke="#7f7f7f" stroke-width="0.9" rx="1.2"/>
<path d="M655.6 24.2 H659 M655.6 26.6 H659 M655.6 29 H659" fill="none" stroke="#5b9bd5" stroke-width="1.0"/>
<rect x="648.30" y="24.00" width="4.90" height="5.00" fill="#fbe5d6" stroke="#c87b4a" stroke-width="0.9"/>
<path d="M648.6 28.8 L653 24.2" fill="none" stroke="#d03030" stroke-width="0.9"/>
<rect x="648.60" y="39.20" width="8.60" height="8.40" fill="#ffffff" stroke="#c4c4c4" stroke-width="0.9"/>
<rect x="650.40" y="41.60" width="9.40" height="9.00" fill="#ffffff" stroke="#b0b0b0" stroke-width="0.9"/>
<text x="655.1" y="49.6" font-size="6.6" font-style="italic" font-weight="bold" text-anchor="middle" fill="#a8a8a8">7</text>
<rect x="784.80" y="5.10" width="20.80" height="20.30" fill="#ffffff" stroke="#b5b5b5" stroke-width="0.9"/>
<rect x="784.80" y="5.10" width="20.80" height="2.90" fill="#7c7c7c"/>
<rect x="787.10" y="9.70" width="16.50" height="2.40" fill="#2b67b1"/>
<rect x="787.10" y="14.70" width="5.60" height="2.50" fill="#2b67b1"/>
<rect x="787.10" y="20.20" width="9.00" height="2.30" fill="#c4d8ee"/>
<rect x="800.40" y="20.20" width="3.20" height="2.30" fill="#c4d8ee"/>
<path d="M791.2 13.2 H804.5 L799.5 19.4 V25.3 L797 24.1 V19.4 Z" fill="#6f6f6f" stroke="#ffffff" stroke-width="0.9"/>
<rect x="833.40" y="8.40" width="21.20" height="10.30" fill="#ffffff" stroke="#a9a9a9" stroke-width="0.9"/>
<rect x="833.40" y="8.40" width="21.20" height="2.50" fill="#6f6f6f"/>
<rect x="835.40" y="13.20" width="2.40" height="2.10" fill="#bdbdbd"/>
<rect x="838.90" y="13.20" width="2.40" height="2.10" fill="#2b67b1"/>
<rect x="842.40" y="13.20" width="2.40" height="2.10" fill="#2b67b1"/>
<rect x="846.50" y="13.20" width="2.40" height="2.10" fill="#bdbdbd"/>
<rect x="850.00" y="13.20" width="2.40" height="2.10" fill="#bdbdbd"/>
<path d="M842.6 16.3 H855.7 L850.1 22.2 V27.7 L847.9 26.5 V22.2 Z" fill="#6f6f6f" stroke="#ffffff" stroke-width="0.9"/>
<rect x="895.00" y="4.90" width="12.60" height="12.60" fill="#ffffff" stroke="#d2d2d2" stroke-width="0.9"/>
<path d="M897 15 V7 M897 15 H905 M899 13 L904 8" fill="none" stroke="#dadada" stroke-width="0.8"/>
<rect x="903.20" y="13.30" width="12.30" height="12.00" fill="#ffffff" stroke="#bdbdbd" stroke-width="0.9"/>
<rect x="903.20" y="13.30" width="12.30" height="2.20" fill="#c9c9c9"/>
<path d="M906 18.3 H913 L910.4 21 V23.6 H908.6 V21 Z" fill="#c2c2c2"/>
<path d="M895.6 19.2 Q896 24 901.4 24 M899.4 21.8 L901.8 24 L899.4 26" fill="none" stroke="#c6c6c6" stroke-width="0.9"/>
<path d="M972.6 4.4 H983 L988.4 9.8 V25.2 H972.6 Z" fill="#ffffff" stroke="#9a9a9a" stroke-width="0.9"/>
<path d="M983 4.4 V9.8 H988.4" fill="none" stroke="#9a9a9a" stroke-width="0.9"/>
<circle cx="988.1" cy="21.9" r="5.4" fill="#ffffff"/>
<path d="M984.2 21.2 A4 4 0 0 1 991.2 19.3" fill="none" stroke="#4e9668" stroke-width="1.7"/>
<path d="M992 22.6 A4 4 0 0 1 985 24.5" fill="none" stroke="#4e9668" stroke-width="1.7"/>
<path d="M992.9 17.2 V21 H989.2 Z" fill="#4e9668"/>
<path d="M983.3 26.6 V22.8 H987 Z" fill="#4e9668"/>
<path d="M1027.4 5 H1037.6 L1042.6 10 V25.6 H1027.4 Z" fill="#ffffff" stroke="#8a8a8a" stroke-width="0.9"/>
<path d="M1037.6 5 V10 H1042.6" fill="none" stroke="#8a8a8a" stroke-width="0.9"/>
<path d="M1029.4 9 H1036 M1029.4 12 H1040.4 M1029.4 15 H1040.4 M1029.4 18 H1036 M1029.4 21 H1036 M1032.6 9 V23 M1036 9 V23" fill="none" stroke="#c2c2c2" stroke-width="0.8"/>
<rect x="1036.40" y="15.40" width="11.20" height="11.90" fill="#ffffff" stroke="#7c7c7c" stroke-width="0.9"/>
<rect x="1040.43" y="16.71" width="5.82" height="2.02" fill="#b9b9b9"/>
<rect x="1037.63" y="16.71" width="2.13" height="9.28" fill="#b9b9b9"/>
<path d="M1041.22 24.09 Q1044.46 23.97 1044.58 20.64" fill="none" stroke="#2e75b6" stroke-width="0.95"/>
<path d="M1042.58 22.24 L1044.58 20.04 L1046.58 22.24" fill="none" stroke="#2e75b6" stroke-width="0.95"/>
<path d="M1043.02 22.09 L1040.82 24.09 L1043.02 26.09" fill="none" stroke="#2e75b6" stroke-width="0.95"/>
<rect x="1078.30" y="5.20" width="18.50" height="17.80" fill="#ffffff" stroke="#8c8c8c" stroke-width="0.9"/>
<rect x="1084.96" y="7.16" width="9.62" height="3.03" fill="#b3b3b3"/>
<rect x="1080.34" y="7.16" width="3.52" height="13.88" fill="#b3b3b3"/>
<path d="M1086.25 18.19 Q1091.62 18.02 1091.80 13.03" fill="none" stroke="#2e75b6" stroke-width="0.95"/>
<path d="M1089.80 14.63 L1091.80 12.43 L1093.80 14.63" fill="none" stroke="#2e75b6" stroke-width="0.95"/>
<path d="M1088.05 16.19 L1085.85 18.19 L1088.05 20.19" fill="none" stroke="#2e75b6" stroke-width="0.95"/>
<g transform="rotate(-35 1094 21.5)"><rect x="1088" y="18.5" width="12" height="6.2" rx="1.2" fill="#ee9aa0"/><rect x="1088" y="18.5" width="3.2" height="6.2" rx="1" fill="#f8d3d5"/></g>
<rect x="1121.30" y="5.20" width="18.50" height="17.80" fill="#ffffff" stroke="#8c8c8c" stroke-width="0.9"/>
<rect x="1127.96" y="7.16" width="9.62" height="3.03" fill="#b3b3b3"/>
<rect x="1123.34" y="7.16" width="3.52" height="13.88" fill="#b3b3b3"/>
<path d="M1129.25 18.19 Q1134.62 18.02 1134.80 13.03" fill="none" stroke="#2e75b6" stroke-width="0.95"/>
<path d="M1132.80 14.63 L1134.80 12.43 L1136.80 14.63" fill="none" stroke="#2e75b6" stroke-width="0.95"/>
<path d="M1131.05 16.19 L1128.85 18.19 L1131.05 20.19" fill="none" stroke="#2e75b6" stroke-width="0.95"/>
<path d="M1136 16.6 V26.6 L1138.3 24.4 L1140 28 L1141.5 27.3 L1139.8 23.8 H1142.8 Z" fill="#ffffff" stroke="#6a6a6a" stroke-width="0.8"/>
<rect x="1172.50" y="5.20" width="18.20" height="17.80" fill="#ffffff" stroke="#8c8c8c" stroke-width="0.9"/>
<rect x="1179.05" y="7.16" width="9.46" height="3.03" fill="#b3b3b3"/>
<rect x="1174.50" y="7.16" width="3.46" height="13.88" fill="#b3b3b3"/>
<path d="M1180.33 18.19 Q1185.60 18.02 1185.79 13.03" fill="none" stroke="#2e75b6" stroke-width="0.95"/>
<path d="M1183.79 14.63 L1185.79 12.43 L1187.79 14.63" fill="none" stroke="#2e75b6" stroke-width="0.95"/>
<path d="M1182.13 16.19 L1179.93 18.19 L1182.13 20.19" fill="none" stroke="#2e75b6" stroke-width="0.95"/>
<path d="M1181.4 22.9 H1191.4 M1187.6 18.4 L1192.6 22.9 L1187.6 27.4" fill="none" stroke="#2e6fbd" stroke-width="2.2"/>
<rect x="1239.40" y="4.60" width="21.40" height="20.60" fill="#ffffff" stroke="#8c8c8c" stroke-width="0.9"/>
<rect x="1247.10" y="6.87" width="11.13" height="3.50" fill="#b3b3b3"/>
<rect x="1241.75" y="6.87" width="4.07" height="16.07" fill="#b3b3b3"/>
<rect x="1249.00" y="12.00" width="13.00" height="15.50" fill="#ffffff"/>
<text x="1255.6" y="24.2" font-family='"Liberation Serif", serif' font-style="italic" font-size="18" text-anchor="middle" fill="#555" textLength="12.5" lengthAdjust="spacingAndGlyphs">fx</text>
<rect x="270.00" y="70.00" width="1010.00" height="36.00" fill="#ffffff"/>
<rect x="276.00" y="78.60" width="86.40" height="18.90" fill="#ffffff" stroke="#cbcbcb" stroke-width="1"/>
<text x="290.00" y="92.02" font-size="10.4" text-anchor="start" fill="#444" textLength="11.50" lengthAdjust="spacingAndGlyphs">A6</text>
<polygon points="351.6,86.6 357,86.6 354.3,89.6" fill="#666"/>
<rect x="373.30" y="84.80" width="1.40" height="1.40" fill="#8c8c8c"/>
<rect x="373.30" y="88.20" width="1.40" height="1.40" fill="#8c8c8c"/>
<rect x="373.30" y="91.60" width="1.40" height="1.40" fill="#8c8c8c"/>
<rect x="385.40" y="78.60" width="84.30" height="18.90" fill="#ffffff" stroke="#cbcbcb" stroke-width="1"/>
<path d="M394 82.3 L406 94.2 M406 82.3 L394 94.2" stroke="#bcbcbc" stroke-width="1.7" fill="none"/>
<path d="M421.5 89.2 L426 94 L435.3 82.6" stroke="#c2c2c2" stroke-width="2.4" fill="none"/>
<text x="455.4" y="92.6" font-family='"Liberation Serif", serif' font-style="italic" font-weight="bold" font-size="17" text-anchor="middle" fill="#707070" textLength="13.5" lengthAdjust="spacingAndGlyphs">fx</text>
<rect x="472.70" y="78.60" width="820.00" height="18.90" fill="#ffffff" stroke="#cbcbcb" stroke-width="1"/>
<text x="482.30" y="92.09" font-size="10.6" text-anchor="start" fill="#333" textLength="19.30" lengthAdjust="spacingAndGlyphs">Brot</text>
</g>
<rect x="255.00" y="0.00" width="25.00" height="60.00" fill="#505050"/>
<polygon points="0,-60 252.1,-60 493.2,780 0,780" fill="#000" opacity="0.9" filter="url(#shb)"/>
<polygon points="0,0 260.2,0 467.4,720 0,720" fill="#169152"/>
<g clip-path="url(#greenclip)">
<polygon points="236.9,-60 291.9,-60 533.7,780 478.7,780" fill="#000" opacity="0.92" filter="url(#shg)"/>
</g>
<polygon points="259.2,0 265.3,0 471.9,720 466.4,720" fill="#000"/>
<g id="logo">
<rect x="90" y="245.8" width="204" height="242.2" rx="11" fill="#fff"/>
<rect x="25.8" y="296.8" width="140" height="139.6" rx="11" fill="#fff"/>
<clipPath id="sheet"><rect x="95.5" y="250.6" width="193.9" height="232.5" rx="7"/></clipPath>
<g clip-path="url(#sheet)">
<rect x="95" y="250" width="196" height="234" fill="#159050"/>
<rect x="95" y="308.8" width="196" height="176" fill="#0f7d42"/>
<rect x="95" y="367" width="196" height="118" fill="#18482a"/>
<rect x="192.3" y="250" width="98" height="59.5" fill="#28c07c"/>
<rect x="192.3" y="308.8" width="98" height="59" fill="#19a863"/>
<rect x="192.3" y="367" width="98" height="59" fill="#129652"/>
<rect x="192.3" y="425" width="98" height="60" fill="#276a43"/>
<rect x="95" y="424.7" width="196" height="0.7" fill="#cfe3d6" opacity="0.55"/>
<rect x="33" y="305" width="130" height="130" rx="9" fill="#000" opacity="0.3" filter="url(#shl)"/>
</g>
<rect x="30.6" y="302" width="129.4" height="129.4" rx="7.5" fill="#0f773d"/>
<path d="M68.5 334.4 L84 334.4 L96.25 358.1 L109.4 334.4 L123.75 334.4 L104 366.5 L124 399 L108.75 399 L95.25 374 L82.25 399 L66.9 399 L87.25 366.5 Z" fill="#fff"/>
</g>
<text y="642.7" font-size="160.6" fill="#ffffff" stroke="#000000" stroke-width="6" stroke-linejoin="round" paint-order="stroke"><tspan x="105.2" textLength="88.5" lengthAdjust="spacingAndGlyphs">0</tspan><tspan x="189.1" textLength="93.3" lengthAdjust="spacingAndGlyphs">4</tspan></text>
</svg></body></html>
